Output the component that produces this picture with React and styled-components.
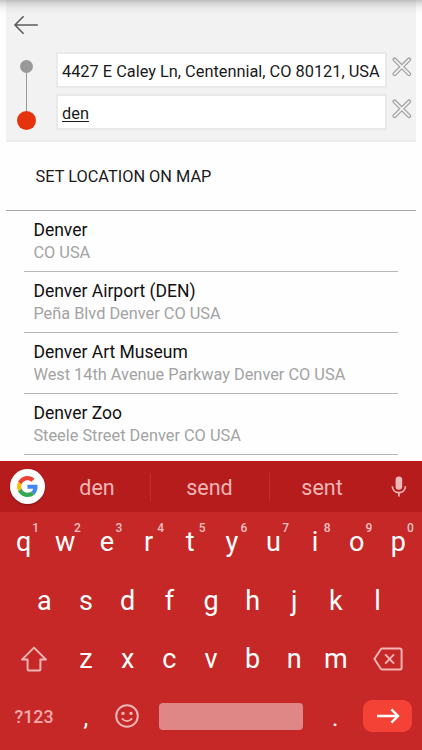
import React, { useState } from 'react'
import styled, { createGlobalStyle } from 'styled-components';

const places = [
    { name: 'Denver', address: 'CO USA' },
    { name: 'Denver Airport (DEN)', address: 'Peña Blvd Denver CO USA' },
    { name: 'Denver Art Museum', address: 'West 14th Avenue Parkway Denver CO USA' },
    { name: 'Denver Zoo', address: 'Steele Street Denver CO USA' },
]

const suggestions = ['den', 'send', 'sent']

const CrossIcon = () => (
    <svg width="20" height="20" viewBox="0 0 20 20" fill="none" strokeLinecap="round">
        <path d="M2.6 2.6L17 17M17 2.6L2.6 17" stroke="#a0a0a0" strokeWidth="4.2" />
        <path d="M2.6 2.6L17 17M17 2.6L2.6 17" stroke="#f0f0f0" strokeWidth="1.8" />
    </svg>
)

const GoogleIcon = () => (
    <svg width="21" height="21" viewBox="0 0 48 48">
        <path fill="#ea4335" d="M24 9.5c3.54 0 6.71 1.22 9.21 3.6l6.85-6.85C35.9 2.38 30.47 0 24 0 14.62 0 6.51 5.38 2.56 13.22l7.98 6.19C12.43 13.72 17.74 9.5 24 9.5z" />
        <path fill="#4285f4" d="M46.98 24.55c0-1.57-.15-3.09-.38-4.55H24v9.02h12.94c-.58 2.96-2.26 5.48-4.78 7.18l7.73 6c4.51-4.18 7.09-10.36 7.09-17.65z" />
        <path fill="#fbbc05" d="M10.53 28.59c-.48-1.45-.76-2.99-.76-4.59s.27-3.14.76-4.59l-7.98-6.19C.92 16.46 0 20.12 0 24c0 3.88.92 7.54 2.56 10.78l7.97-6.19z" />
        <path fill="#34a853" d="M24 48c6.48 0 11.93-2.13 15.89-5.81l-7.73-6c-2.15 1.45-4.92 2.3-8.16 2.3-6.26 0-11.57-4.22-13.47-9.91l-7.98 6.19C6.51 42.62 14.62 48 24 48z" />
    </svg>
)

const MicIcon = () => (
    <svg width="16" height="22" viewBox="0 0 16 22">
        <rect x="4.6" y="0.4" width="6.6" height="13.4" rx="3.3" fill="#efb9b9" />
        <path d="M1.3 10.2C1.6 14 4.3 16.6 7.9 16.6s6.3-2.6 6.6-6.4M7.9 16.6v4" fill="none" stroke="#efb9b9" strokeWidth="1.7" />
    </svg>
)

const ShiftIcon = () => (
    <svg width="28" height="26" viewBox="0 0 28 26" fill="none" stroke="#f5b5b5" strokeWidth="2" strokeLinejoin="round">
        <path d="M14 1.6L26 13.6H20.4V23.2Q20.4 24.4 19.2 24.4H8.8Q7.6 24.4 7.6 23.2V13.6H2Z" />
    </svg>
)

const DeleteIcon = () => (
    <svg width="30" height="24" viewBox="0 0 30 24" fill="none" stroke="#f5b5b5" strokeWidth="2" strokeLinejoin="round">
        <path d="M9.4 1.4H26.4Q28.6 1.4 28.6 3.6V20.4Q28.6 22.6 26.4 22.6H9.4Q8.4 22.6 7.8 21.7L1.4 12L7.8 2.3Q8.4 1.4 9.4 1.4Z" />
        <path d="M12.2 7.4L21 16.6M21 7.4L12.2 16.6" />
    </svg>
)

const SmileyIcon = () => (
    <svg width="24" height="24" viewBox="0 0 24 24">
        <circle cx="12" cy="12" r="10.8" fill="none" stroke="#f5b5b5" strokeWidth="2" />
        <circle cx="8" cy="9.4" r="1.7" fill="#f5b5b5" />
        <circle cx="16" cy="9.4" r="1.7" fill="#f5b5b5" />
        <path d="M6.9 14.4Q12 20 17.1 14.4" fill="none" stroke="#f5b5b5" strokeWidth="1.8" />
    </svg>
)

const App = () => {
    const [from, setFrom] = useState('4427 E Caley Ln, Centennial, CO 80121, USA');
    const [to, setTo] = useState('den');
    const type = (letter) => {
        setTo(to + letter);
    }
    const renderKeys = (letters) => letters.split('').map((letter) => (
        <Key key={letter} onClick={() => type(letter)}>{letter}</Key>
    ))
    return (
        <Screen>
            <GlobalStyle />
            <Header>
                <BackButton aria-label="Back">
                    <svg width="26" height="20" viewBox="0 0 26 20" fill="none" stroke="#5c5c5c" strokeWidth="1.6">
                        <path d="M10.6 1.2L2 10L10.6 18.8M2 10H24.8" />
                    </svg>
                </BackButton>
                <Route>
                    <Stops>
                        <Dot $size="13px" $color="#999" />
                        <Line />
                        <Dot $size="19px" $color="#e5330f" />
                    </Stops>
                    <Fields>
                        <FieldRow>
                            <Field value={from} onChange={(e) => setFrom(e.target.value)} />
                            <ClearButton aria-label="Clear" onClick={() => setFrom('')}><CrossIcon /></ClearButton>
                        </FieldRow>
                        <FieldRow>
                            <Field $underline value={to} onChange={(e) => setTo(e.target.value)} />
                            <ClearButton aria-label="Clear" onClick={() => setTo('')}><CrossIcon /></ClearButton>
                        </FieldRow>
                    </Fields>
                </Route>
            </Header>
            <MapButton>SET LOCATION ON MAP</MapButton>
            <Places>
                {places.map((place) => (
                    <Place key={place.name}>
                        <PlaceName>{place.name}</PlaceName>
                        <PlaceAddress>{place.address}</PlaceAddress>
                    </Place>
                ))}
            </Places>
            <Keyboard>
                <SuggestionBar>
                    <GoogleButton><GoogleIcon /></GoogleButton>
                    <Suggestions>
                        {suggestions.map((word) => (
                            <Suggestion key={word} onClick={() => setTo(word)}>{word}</Suggestion>
                        ))}
                    </Suggestions>
                    <MicIcon />
                </SuggestionBar>
                <KeyRow>
                    {'qwertyuiop'.split('').map((letter, i) => (
                        <Key key={letter} onClick={() => type(letter)}>
                            {letter}
                            <Hint>{(i + 1) % 10}</Hint>
                        </Key>
                    ))}
                </KeyRow>
                <KeyRow>{renderKeys('asdfghjkl')}</KeyRow>
                <KeyRow>
                    <Key $width="62.4px" aria-label="Shift"><ShiftIcon /></Key>
                    {renderKeys('zxcvbnm')}
                    <Key $width="62.4px" aria-label="Delete" onClick={() => setTo(to.slice(0, -1))}><DeleteIcon /></Key>
                </KeyRow>
                <BottomRow>
                    <SymbolKey>?123</SymbolKey>
                    <PunctuationKey>,</PunctuationKey>
                    <Key aria-label="Emoji"><SmileyIcon /></Key>
                    <SpaceKey aria-label="Space" onClick={() => type(' ')} />
                    <PunctuationKey $width="60px">.</PunctuationKey>
                    <EnterKey aria-label="Go">
                        <svg width="24" height="16" viewBox="0 0 24 16" fill="none" stroke="#fff" strokeWidth="2.4">
                            <path d="M1 8H22M15.4 1.4L22 8L15.4 14.6" />
                        </svg>
                    </EnterKey>
                </BottomRow>
            </Keyboard>
        </Screen>
    )
}

export default App;

const GlobalStyle = createGlobalStyle`
    * {
        box-sizing: border-box;
    }
    body {
        margin: 0;
        background: #fefefe;
        font-family: Roboto, sans-serif;
    }
    button {
        padding: 0;
        border: none;
        background: none;
        font-family: inherit;
        color: inherit;
    }
    svg {
        display: block;
        flex: none;
    }
`;

const Screen = styled.div`
    display: flex;
    flex-direction: column;
    width: 422px;
    height: 750px;
    overflow: hidden;
    background: linear-gradient(#c4c4c4 0px, #dcdcdc 3px, #f4f4f4 8px, #fefefe 14px);
`;

const Header = styled.div`
    display: flex;
    flex-direction: column;
    height: 142px;
    margin: 0 6px;
    border-bottom: 2px solid #ececec;
    background: linear-gradient(#bcbcbc 0px, #d4d4d4 3px, #e9e9e9 8px, #f2f2f2 14px);
`;

const BackButton = styled.button`
    align-self: flex-start;
    margin: 15px 0 0 7px;
`;

const Route = styled.div`
    display: flex;
    margin-top: 17px;
`;

const Stops = styled.div`
    display: flex;
    flex-direction: column;
    align-items: center;
    width: 19px;
    height: 70px;
    margin: 8px 0 0 11px;
`;

const Dot = styled.div`
    flex: none;
    width: ${(props) => props.$size};
    height: ${(props) => props.$size};
    border-radius: 50%;
    background: ${(props) => props.$color};
`;

const Line = styled.div`
    flex: 1;
    width: 1px;
    background: #999;
`;

const Fields = styled.div`
    display: flex;
    flex-direction: column;
    gap: 6px;
    margin-left: 20px;
`;

const FieldRow = styled.div`
    display: flex;
    align-items: center;
    gap: 5px;
`;

const Field = styled.input`
    width: 331px;
    height: 36px;
    padding: 2px 0 0 4px;
    border: 2px solid #e9e9e9;
    background: #fff;
    font-family: Roboto, sans-serif;
    font-size: 16.35px;
    color: #1a1a1a;
    text-decoration: ${(props) => (props.$underline ? 'underline' : 'none')};
    text-underline-offset: 2px;

    &:focus {
        outline: none;
    }
`;

const ClearButton = styled.button`
    margin-top: -7px;
`;

const MapButton = styled.button`
    height: 69px;
    margin: 0 6px;
    padding-left: 29.5px;
    border-bottom: 1px solid #a8a8a8;
    text-align: left;
    font-size: 16.35px;
    color: #1a1a1a;
`;

const Places = styled.div`
    flex: none;
    height: 250px;
    margin: 0 24px;
`;

const Place = styled.div`
    height: 61px;
    padding: 8px 0 0 9.4px;
    border-bottom: 1px solid #b8b8b8;
`;

const PlaceName = styled.div`
    font-size: 17.5px;
    line-height: 23px;
    color: #111;
`;

const PlaceAddress = styled.div`
    font-size: 16.33px;
    line-height: 21px;
    color: #a3a3a3;
`;

const Keyboard = styled.div`
    display: flex;
    flex-direction: column;
    height: 289px;
    background: #c62828;
    color: #fff;
`;

const SuggestionBar = styled.div`
    display: flex;
    align-items: center;
    height: 51px;
    margin-bottom: 1px;
    padding: 0 15px 0 10px;
    background: #b71c1c;
`;

const GoogleButton = styled.button`
    display: flex;
    align-items: center;
    justify-content: center;
    width: 35px;
    height: 35px;
    border-radius: 50%;
    background: #fff;
    box-shadow: 0 1px 2px rgba(0, 0, 0, 0.3);
`;

const Suggestions = styled.div`
    display: flex;
    flex: 1;
`;

const Suggestion = styled.button`
    width: 105px;
    height: 28px;
    padding: 2px 1px 0 0;
    font-size: 21.5px;
    color: #efb5b5;

    &:nth-child(2) {
        width: 120px;
        border: solid #c02f2f;
        border-width: 0 1px;
    }
`;

const KeyRow = styled.div`
    display: flex;
    align-items: center;
    justify-content: center;
    height: 58.5px;
`;

const BottomRow = styled(KeyRow)`
    justify-content: flex-start;
    height: 57px;
    padding: 0 0 2px 3px;
`;

const Key = styled.button`
    position: relative;
    display: flex;
    align-items: center;
    justify-content: center;
    width: ${(props) => props.$width || '41.65px'};
    height: 100%;
    font-size: 27px;
`;

const PunctuationKey = styled(Key)`
    padding-top: 3px;
    font-size: 24px;
`;

const Hint = styled.span`
    position: absolute;
    top: 8px;
    left: 29.5px;
    font-size: 12px;
    font-weight: 500;
    color: #f5c0c0;
`;

const SymbolKey = styled.button`
    width: 62px;
    font-size: 17.8px;
    font-weight: 500;
    color: #f2abab;
`;

const SpaceKey = styled.button`
    width: 144px;
    height: 27px;
    margin: 0 2px 0 11px;
    border-radius: 4px;
    background: #df8787;
`;

const EnterKey = styled.button`
    display: flex;
    align-items: center;
    justify-content: center;
    width: 49px;
    height: 32px;
    margin-left: -2px;
    border-radius: 9px;
    background: #f44336;
`;
